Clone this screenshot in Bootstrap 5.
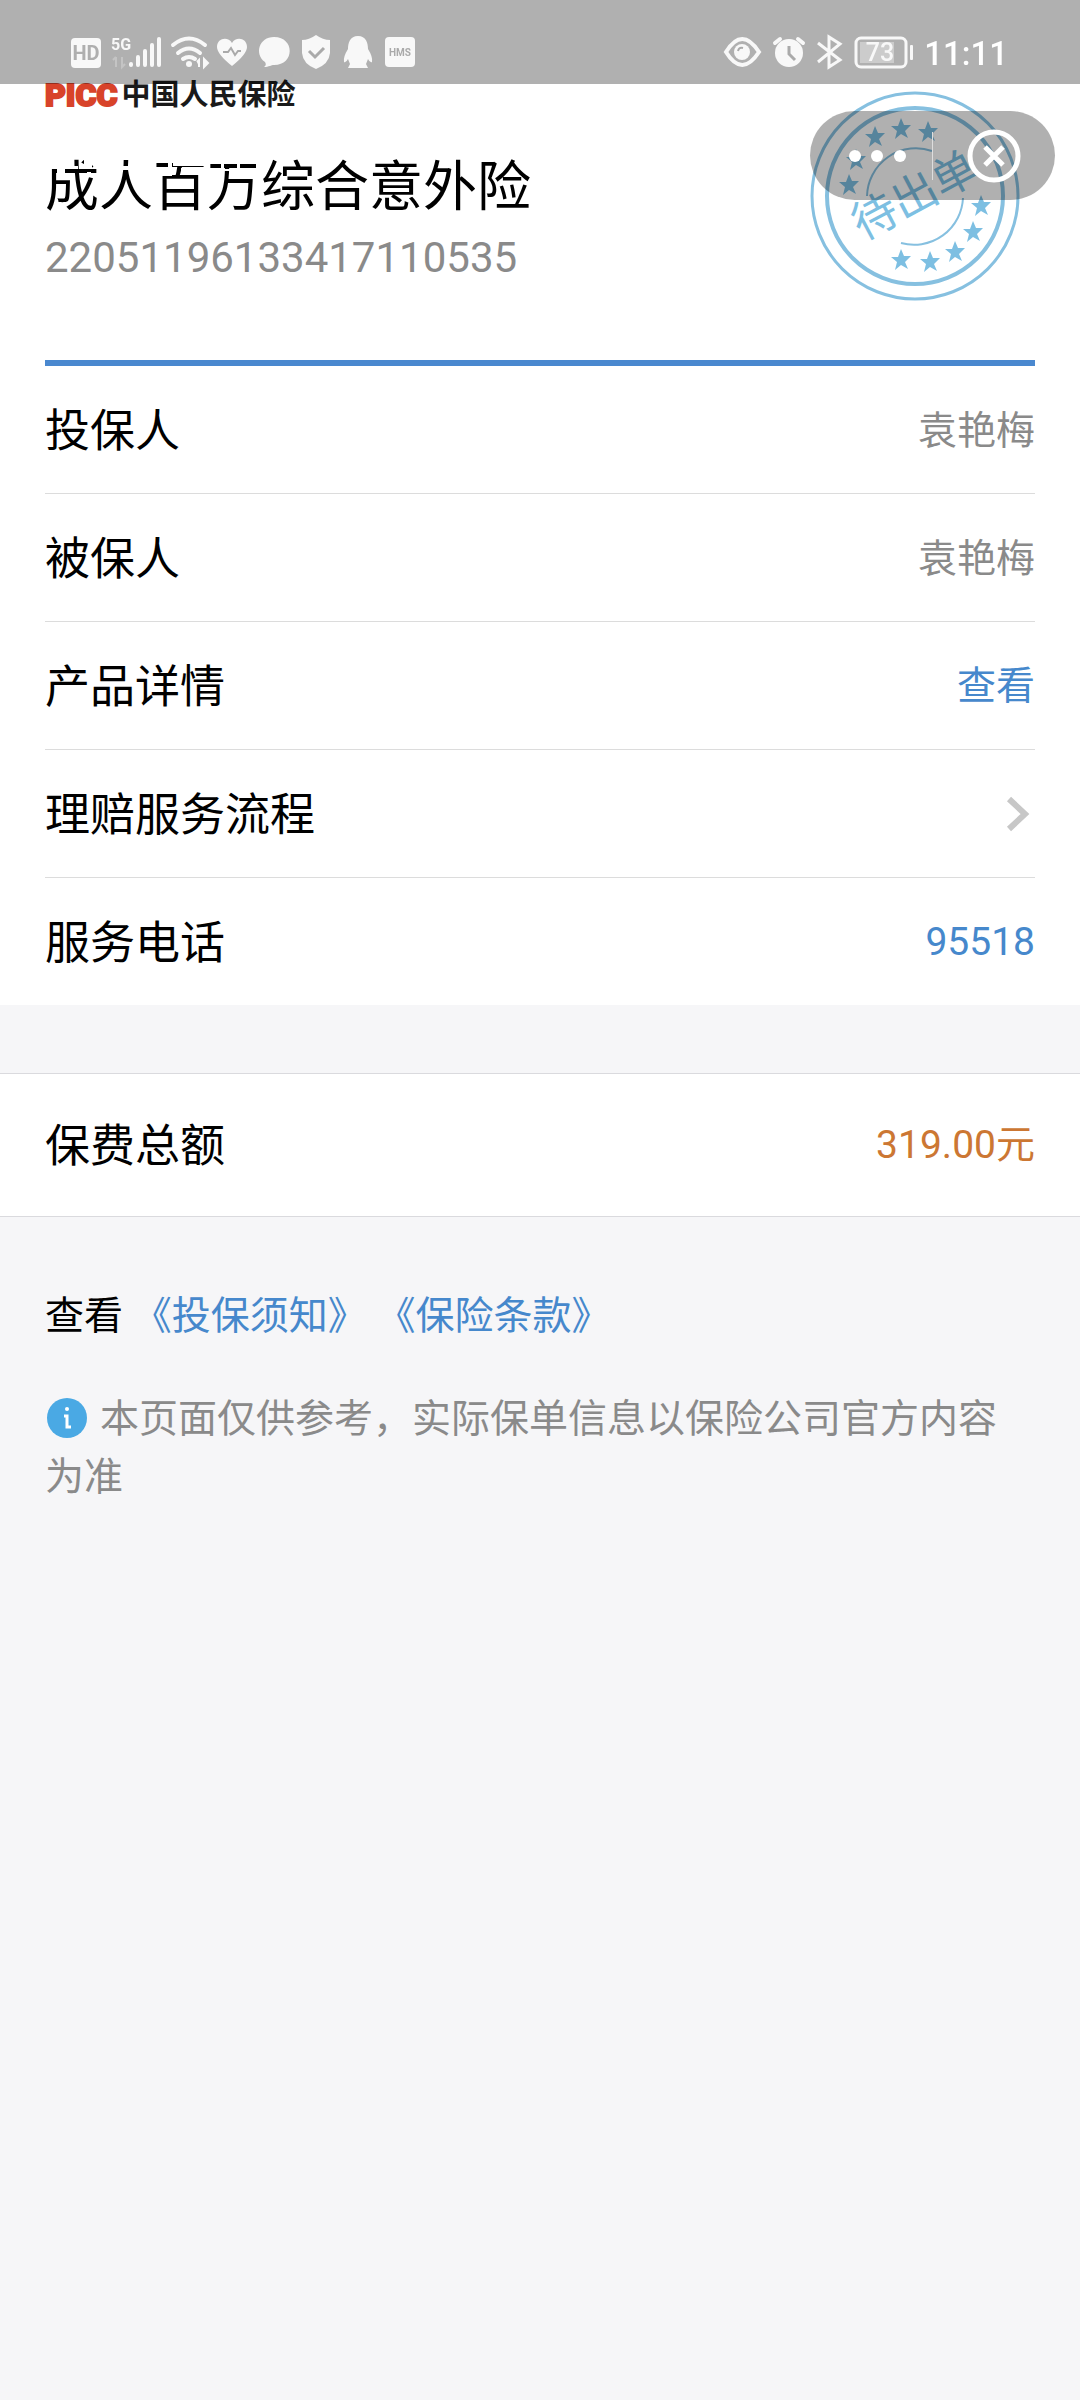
<!DOCTYPE html>
<html lang="zh-CN">
<head>
<meta charset="utf-8">
<meta name="viewport" content="width=device-width, initial-scale=1">
<title>成人百万综合意外险</title>
<link rel="stylesheet" href="https://cdn.jsdelivr.net/npm/bootstrap@5.3.0/dist/css/bootstrap.min.css">
<style>
  body { background: #f6f6f8; color: #000; font-family: Roboto, "Noto Sans CJK SC", sans-serif; font-size: 39px; line-height: 58px; }
  a { text-decoration: none; color: #4688cc; }
  .gutter { padding-left: 45px; padding-right: 45px; }
  .statusbar { height: 84px; padding: 20px 72px 0 70px; background: rgba(0,0,0,.31); color: #fff; z-index: 3; }
  .statusbar svg { display: block; flex: none; }
  .clock { font-size: 33px; line-height: 40px; font-weight: 500; padding-top: 14px; }
  .policy-head { padding-top: 77px; height: 360px; }
  .brand { line-height: 36px; gap: 4px; }
  .brand-en { font-size: 32px; font-weight: 900; color: #d8432a; -webkit-text-stroke: 2px #d8432a; }
  .brand-cn { font-size: 29px; font-weight: 700; color: #1a1a1a; }
  .policy-title { font-size: 54px; line-height: 80px; margin: 35px 0 0; font-weight: 400; }
  .policy-no { font-size: 42px; line-height: 60px; color: #8a8a8a; }
  .ghost { left: 45px; top: 158px; }
  .stamp { right: 60px; top: 90px; }
  .capsule { right: 25px; top: 111px; width: 245px; height: 89px; border-radius: 45px; background: rgba(0,0,0,.31); z-index: 2; }
  .capsule button { border: 0; background: none; padding: 0; flex: 0 0 122px; height: 100%; display: flex; align-items: center; justify-content: center; }
  .capsule .more { padding-left: 12px; }
  .capsule .split { width: 1px; height: 48px; background: #ddd; }
  .rule-top { border-top: 6px solid #4a88cf; }
  .info-row { height: 128px; border-bottom: 1px solid #dcdcdc; }
  .info-row:last-child { border-bottom: 0; height: 127px; }
  .row-label { font-size: 45px; padding-top: 4px; }
  .row-value { color: #8a8a8a; padding-top: 2px; }
  .total { margin-top: 68px; height: 144px; border-top: 1px solid #dadade; border-bottom: 1px solid #dadade; }
  .price { color: #cc7733; }
  .notes { padding-top: 70px; }
  .notes p { margin: 0 0 45px; }
  .hint { color: #8a8a8a; }
  .hint svg { margin: 0 13px 0 2px; vertical-align: -6px; }
</style>
<script src="https://cdn.jsdelivr.net/npm/bootstrap@5.3.0/dist/js/bootstrap.bundle.min.js"></script>
</head>
<body>
<header class="statusbar fixed-top d-flex justify-content-between align-items-start">
  <svg width="350" height="60" viewBox="70 20 350 60" fill="#f8f8f8" role="img" aria-label="HD 5G">
    <rect x="71" y="38" width="30" height="30" rx="4"/>
    <text x="86" y="60" font-size="20" font-weight="700" text-anchor="middle" fill="#afafaf">HD</text>
    <text x="111" y="50" font-size="16" font-weight="700">5G</text>
    <path d="M116 57v10M113 60l3-3M122 57v10l3-3" fill="none" stroke="#c4c4c4" stroke-width="2"/>
    <g stroke="#f8f8f8" stroke-width="4" stroke-linecap="round"><path d="M131 64v1M138 57v8M145 51v14M152 45v20M159 39v26"/></g>
    <g fill="none" stroke="#f8f8f8" stroke-width="4" stroke-linecap="round"><path d="M173 45q16-13 32 0M178 53q11-9 22 0M183 59q6-4 12 0"/></g>
    <circle cx="189" cy="64" r="3"/>
    <path d="M199 60v7M197 62l2-2v7M204 59v8l4-4z" stroke="#f8f8f8" stroke-width="2"/>
    <path d="M232 66q-15-12-15-19c0-9 11-11 15-4c4-7 15-5 15 4q0 7-15 19z"/>
    <path d="M223 52h5l3-4 4 7 3-4h3" fill="none" stroke="#aaa" stroke-width="2"/>
    <path d="M274 37c21 0 21 28 0 28-3 0-5 2-10 2q3-2 1-5c-11-8-6-25 9-25z"/>
    <path d="M316 35q7 5 14 5v13q-1 11-14 16q-13-5-14-16V40q7 0 14-5z"/>
    <path d="M309 51l6 6 9-9" fill="none" stroke="#aaa" stroke-width="3"/>
    <path d="M358 36c8 0 10 7 10 13q5 8 4 13q-2 1-4-3l-2 5 2 4h-20l2-4-2-5q-2 4-4 3q-1-5 4-13c0-6 2-13 10-13z"/>
    <rect x="385" y="37" width="30" height="30" rx="4"/>
    <text x="400" y="56" font-size="10" font-weight="700" text-anchor="middle" fill="#aaa">HMS</text>
  </svg>
  <div class="d-flex align-items-start">
    <svg width="205" height="60" viewBox="720 20 205 60" fill="#f8f8f8" role="img" aria-label="73%">
      <path d="M727 52q16-26 33 0q-17 26-33 0z" fill="none" stroke="#f8f8f8" stroke-width="4"/>
      <circle cx="743" cy="52" r="8"/><path d="M739 51q1-4 5-3" fill="none" stroke="#aaa" stroke-width="2"/>
      <circle cx="790" cy="53" r="14"/><path d="M776 43l5-4M804 43l-5-4" stroke="#f8f8f8" stroke-width="4" stroke-linecap="round"/>
      <path d="M790 46v8l6 6" fill="none" stroke="#aaa" stroke-width="3"/>
      <path d="M819 43l22 17-11 7V37l11 7-22 18" fill="none" stroke="#f8f8f8" stroke-width="3"/>
      <rect x="857" y="38" width="50" height="29" rx="5" fill="none" stroke="#f8f8f8" stroke-width="3"/>
      <rect x="861" y="42" width="34" height="21" fill="#ccc"/>
      <text x="881" y="61" font-size="25" font-weight="500" text-anchor="middle">73</text>
      <rect x="911" y="45" width="3" height="15" rx="1"/>
    </svg>
    <time class="clock">11:11</time>
  </div>
</header>

<main>
  <section class="bg-white gutter position-relative">
    <div class="policy-head">
      <div class="brand d-flex align-items-center"><span class="brand-en">PICC</span><span class="brand-cn">中国人民保险</span></div>
      <h1 class="policy-title">成人百万综合意外险</h1>
      <div class="policy-no">22051196133417110535</div>
    </div>
    <!-- white traces of the collapsed navigation bar over the heading -->
    <svg class="ghost position-absolute" width="220" height="20" viewBox="45 158 220 20" fill="#fff" aria-hidden="true">
      <path d="M48 160h18v9h-18zM57 167h8v6h-8zM74 166h4v3h-4zM84 160h8v9h-8zM87 172h4v4h-4zM120 166h14v4h-14zM168 160h4v9h-4zM173 160h32v6h-32zM160 169h12v7h-12zM181 168h14v3h-14zM221 160h3v9h-3zM237 160h3v9h-3zM215 169h22v2h-22zM256 160h2v9h-2z"/>
    </svg>
    <svg class="stamp position-absolute" width="212" height="212" viewBox="808 90 212 212" role="img" aria-label="待出单">
      <defs><path id="star" d="M0-11L3-4 10-4 4 2 7 9 0 5-6 10-4 2-10-3-3-3z"/></defs>
      <g fill="none" stroke="#86c0e0"><circle cx="915" cy="196" r="103" stroke-width="3"/><circle cx="915" cy="196" r="88" stroke-width="4"/>
      <path d="M867 196A49 49 0 0 1 932 151M963 198A49 49 0 0 1 901 243" stroke-width="2"/></g>
      <g fill="#7dbfe2">
        <use href="#star" x="849" y="185"/><use href="#star" x="856" y="160"/><use href="#star" x="875" y="137"/><use href="#star" x="901" y="129"/><use href="#star" x="928" y="132"/>
        <use href="#star" x="981" y="206"/><use href="#star" x="973" y="232"/><use href="#star" x="955" y="252"/><use href="#star" x="930" y="262"/><use href="#star" x="901" y="260"/>
        <text transform="translate(915 196) rotate(-28)" text-anchor="middle" y="15" font-size="45">待出单</text>
      </g>
    </svg>
    <div class="capsule position-absolute d-flex align-items-center">
      <button type="button" class="more" aria-label="更多"><svg width="60" height="14"><g fill="#fff"><circle cx="8" cy="7" r="6"/><circle cx="30" cy="7" r="6"/><circle cx="53" cy="7" r="6"/></g></svg></button>
      <span class="split"></span>
      <button type="button" aria-label="关闭"><svg width="54" height="54" fill="none" stroke="#fff"><circle cx="27" cy="27" r="24" stroke-width="5"/><path d="M18 18l18 18M36 18L18 36" stroke-width="5"/></svg></button>
    </div>

    <div class="rule-top">
      <div class="info-row d-flex justify-content-between align-items-center"><span class="row-label">投保人</span><span class="row-value">袁艳梅</span></div>
      <div class="info-row d-flex justify-content-between align-items-center"><span class="row-label">被保人</span><span class="row-value">袁艳梅</span></div>
      <div class="info-row d-flex justify-content-between align-items-center"><span class="row-label">产品详情</span><a href="#">查看</a></div>
      <a href="#" class="info-row d-flex justify-content-between align-items-center text-black"><span class="row-label">理赔服务流程</span>
        <svg width="30" height="36" fill="none" stroke="#c7c7c7" stroke-width="6"><path d="M4 3l16 15L4 33"/></svg></a>
      <div class="info-row d-flex justify-content-between align-items-center"><span class="row-label">服务电话</span><a href="tel:95518">95518</a></div>
    </div>
  </section>

  <section class="total bg-white gutter d-flex justify-content-between align-items-center">
    <span class="row-label">保费总额</span><span class="price">319.00元</span>
  </section>

  <section class="notes gutter">
    <p>查看 <a href="#">《投保须知》</a> <a href="#">《保险条款》</a></p>
    <p class="hint"><svg width="40" height="40" aria-hidden="true"><circle cx="20" cy="20" r="20" fill="#4aa9e4"/><circle cx="20" cy="11" r="2" fill="#fff"/><path d="M17 18h3v11h4" fill="none" stroke="#fff" stroke-width="3"/></svg>本页面仅供参考，实际保单信息以保险公司官方内容为准</p>
  </section>
</main>
</body>
</html>
